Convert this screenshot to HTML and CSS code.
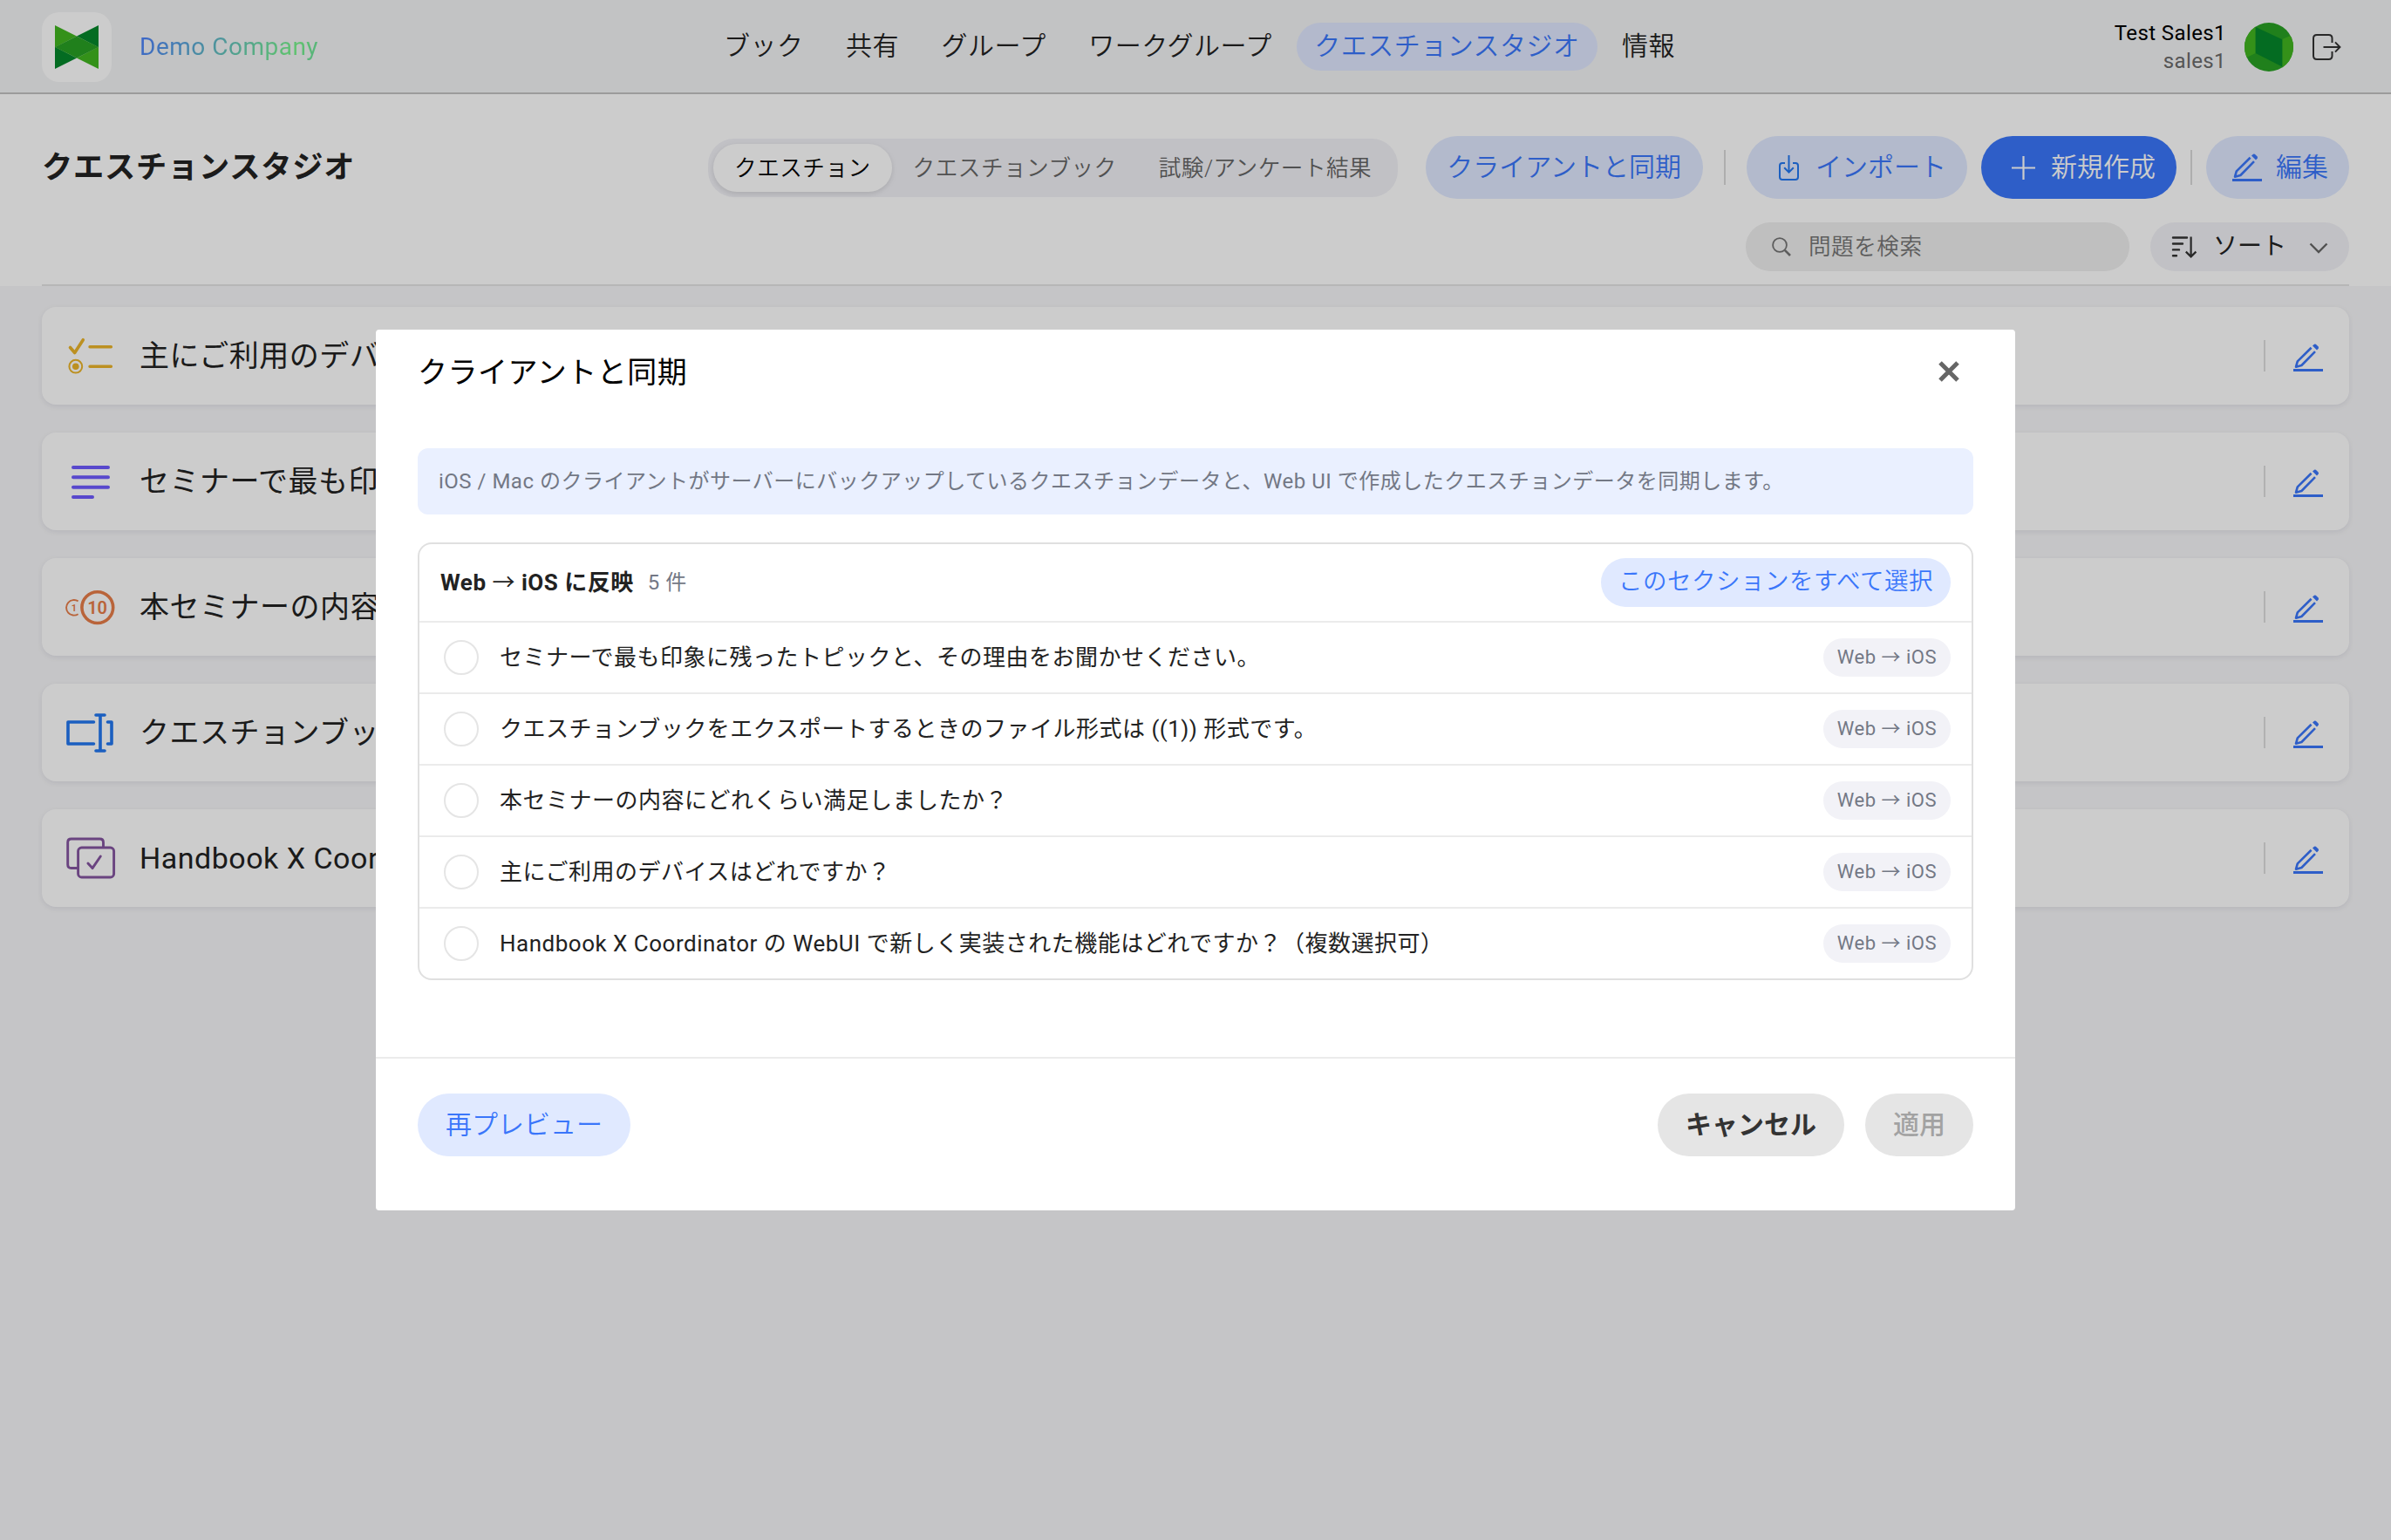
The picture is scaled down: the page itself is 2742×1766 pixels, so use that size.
FILE: index.html
```html
<!DOCTYPE html>
<html lang="ja">
    <head>
        <meta charset="utf-8">
        <title>クエスチョンスタジオ</title>
        <link rel="stylesheet" href="styles.css">
    </head>
    <body>
        <svg class="defs">
            <symbol id="pencil" viewBox="0 0 34 32">
                <path d="M20.6 4.8L4.8 20.4L3 26.7L9.4 25L25 9.2" fill="none" stroke="currentColor" stroke-width="2.6" stroke-linejoin="round"/>
                <path d="M22 2.6L24 .8Q25.4 .2 26.6 1.4L28.6 3.4Q29.4 4.6 28.8 5.6L27 7.6z" fill="currentColor"/>
                <path d="M0 29h34v3H0z" fill="currentColor"/>
            </symbol>
        </svg>
        <div id="header">
            <div class="brand">
                <div class="logo">
                    <svg width="50" height="50" viewBox="0 0 50 50">
                        <path d="M0 0L25 12.6L0 25.2zM50 50L25 37.4L50 24.8z" fill="#42b620"/>
                        <path d="M50 0L25 12.6L50 25.2zM0 50L25 37.4L0 24.8z" fill="#05872b"/>
                        <path d="M0 25L25 12.5L50 25L25 37.5z" fill="#28a023"/>
                    </svg>
                </div>
                <span class="company">Demo Company</span>
            </div>
            <div class="nav">
                <a>ブック</a>
                <a>共有</a>
                <a>グループ</a>
                <a>ワークグループ</a>
                <a class="active">クエスチョンスタジオ</a>
                <a>情報</a>
            </div>
            <div class="user">
                <div class="names">
                    <div>Test Sales1</div>
                    <div class="login">sales1</div>
                </div>
                <svg class="avatar" width="56" height="56" viewBox="0 0 56 56">
                    <path d="M0 0h56v56H0z" fill="#28a023"/>
                    <path d="M0 0h12.7v35L0 41zM56 13.5L43.3 19v37H56z" fill="#42b620"/>
                    <path d="M12.7 5L43.3 19.3V50.5L12.7 35z" fill="#05872b"/>
                </svg>
                <svg width="33" height="30" viewBox="0 0 33 30">
                    <path d="M22.5 10V5Q22.5 1 18.5 1H5Q1 1 1 5V25Q1 29 5 29H18.5Q22.5 29 22.5 25V20M12.5 15H31M26 9.4L31.4 15L26 20.6" fill="none" stroke="#333" stroke-width="2"/>
                </svg>
            </div>
        </div>
        <div id="toolbar">
            <div class="row">
                <h1>クエスチョンスタジオ</h1>
                <div class="tabs">
                    <span class="tab selected">クエスチョン</span>
                    <span class="tab">クエスチョンブック</span>
                    <span class="tab">試験/アンケート結果</span>
                </div>
                <a class="button sync">クライアントと同期</a>
                <span class="divider"></span>
                <a class="button import">
                    <svg width="23" height="29" viewBox="0 0 23 29">
                        <path d="M7 9H4Q1 9 1 12V25Q1 28 4 28H19Q22 28 22 25V12Q22 9 19 9H16M11.5 0V19.5M6.2 14.3L11.5 19.6L16.8 14.3" fill="none" stroke="#2277f0" stroke-width="2"/>
                    </svg>インポート</a>
                <a class="button primary">
                    <svg width="27" height="27" viewBox="0 0 27 27"><path d="M13.5 0v27M0 13.5h27" stroke="#fff" stroke-width="2.2"/></svg>新規作成</a>
                <span class="divider narrow"></span>
                <a class="button edit"><svg width="34" height="32"><use href="#pencil"/></svg>編集</a>
            </div>
            <div class="row filters">
                <div class="search">
                    <svg width="22" height="22" viewBox="0 0 22 22"><path d="M14.8 14.8L21 21" stroke="#757575" stroke-width="2.6"/><circle cx="9" cy="9" r="7.9" fill="none" stroke="#757575" stroke-width="1.8"/></svg>
                    <span>問題を検索</span>
                </div>
                <div class="sort">
                    <svg width="30" height="25" viewBox="0 0 30 25"><path d="M2 1.5H18M2 8.5H13M2 15.4H9M2 22.3H6" stroke="#333" stroke-width="2.4" stroke-linecap="round"/><path d="M22.6 .5V23M16.8 17.6L22.6 23.4L28.4 17.6" fill="none" stroke="#333" stroke-width="2.2"/></svg>
                    <span>ソート</span>
                    <svg class="chevron" width="22" height="13" viewBox="0 0 22 13"><path d="M1.5 1.5L11 11L20.5 1.5" fill="none" stroke="#666" stroke-width="2.4"/></svg>
                </div>
            </div>
        </div>
        <div id="list">
            <div class="card">
                <svg width="64" height="64" viewBox="0 0 64 64" fill="none" stroke="#ebb52a" stroke-linecap="round" stroke-linejoin="round">
                    <path d="M8.5 22.5L13.7 28.5L23.3 13.7" stroke-width="3.6"/>
                    <path d="M31 21.7H55.4M31 44.2H55.4" stroke-width="3.4"/>
                    <circle cx="14.8" cy="44.2" r="7.4" stroke-width="2"/>
                    <circle cx="14.8" cy="44.2" r="3.8" fill="#ebb52a" stroke="none"/>
                </svg>
                <span class="title">主にご利用のデバ</span>
                <a class="pen"><svg width="34" height="32"><use href="#pencil"/></svg></a>
            </div>
            <div class="card">
                <svg width="64" height="64" viewBox="0 0 64 64" stroke="#6e5aff" stroke-width="4" stroke-linecap="round">
                    <path d="M12 16H52M12 27.3H52M12 38.7H52M12 50H34"/>
                </svg>
                <span class="title">セミナーで最も印</span>
                <a class="pen"><svg width="34" height="32"><use href="#pencil"/></svg></a>
            </div>
            <div class="card">
                <svg width="64" height="64" viewBox="0 0 64 64" fill="none" stroke="#e87d49">
                    <circle cx="39.8" cy="32.6" r="17.9" stroke-width="3.6"/>
                    <path d="M17.6 25.4A8.8 8.8 0 1 0 17.6 40.2" stroke-width="1.9"/>
                    <text x="39.6" y="39.9" font-size="20" class="num">10</text>
                    <text x="13" y="36.8" font-size="11" class="num">1</text>
                </svg>
                <span class="title">本セミナーの内容</span>
                <a class="pen"><svg width="34" height="32"><use href="#pencil"/></svg></a>
            </div>
            <div class="card">
                <svg width="64" height="64" viewBox="0 0 64 64" fill="none" stroke="#2277f0" stroke-width="3.6" stroke-linecap="round" stroke-linejoin="round">
                    <path d="M35.5 20H6V45H35.5M51.5 20H56V45H51.5M43 12V53M38 12H48M38 53H48"/>
                </svg>
                <span class="title">クエスチョンブッ</span>
                <a class="pen"><svg width="34" height="32"><use href="#pencil"/></svg></a>
            </div>
            <div class="card">
                <svg width="64" height="64" viewBox="0 0 64 64" fill="none" stroke="#8555a0" stroke-width="2.9" stroke-linecap="round" stroke-linejoin="round">
                    <path d="M46.5 19V14Q46.5 10 42.5 10H9.7Q5.7 10 5.7 14V39.5Q5.7 43.5 9.7 43.5H16"/>
                    <rect x="17.6" y="20" width="41" height="34" rx="4"/>
                    <path d="M28.9 38L34 43.6L43.3 30"/>
                </svg>
                <span class="title">Handbook X Coor</span>
                <a class="pen"><svg width="34" height="32"><use href="#pencil"/></svg></a>
            </div>
        </div>

        <div id="overlay">
            <div class="modal">
                <div class="modal-head">
                    <h2>クライアントと同期</h2>
                    <svg width="24" height="24" viewBox="0 0 24 24"><path d="M2 2L22 22M22 2L2 22" stroke="#666" stroke-width="5"/></svg>
                </div>
                <div class="modal-body">
                    <div class="info">iOS / Mac のクライアントがサーバーにバックアップしているクエスチョンデータと、Web UI で作成したクエスチョンデータを同期します。</div>
                    <div class="section">
                        <div class="section-head">
                            <b>Web <span class="arrow">→</span> iOS に反映</b>
                            <span class="count">5 件</span>
                            <a class="select-all">このセクションをすべて選択</a>
                        </div>
                        <div class="item"><i></i><span>セミナーで最も印象に残ったトピックと、その理由をお聞かせください。</span><em>Web → iOS</em></div>
                        <div class="item"><i></i><span>クエスチョンブックをエクスポートするときのファイル形式は ((1)) 形式です。</span><em>Web → iOS</em></div>
                        <div class="item"><i></i><span>本セミナーの内容にどれくらい満足しましたか？</span><em>Web → iOS</em></div>
                        <div class="item"><i></i><span>主にご利用のデバイスはどれですか？</span><em>Web → iOS</em></div>
                        <div class="item"><i></i><span>Handbook X Coordinator の WebUI で新しく実装された機能はどれですか？（複数選択可）</span><em>Web → iOS</em></div>
                    </div>
                </div>
                <div class="modal-foot">
                    <a class="button preview">再プレビュー</a>
                    <a class="button gray">キャンセル</a>
                    <a class="button gray disabled">適用</a>
                </div>
            </div>
        </div>
    </body>
</html>
```

FILE: styles.css
```css
* {
    box-sizing: border-box;
}
body {
    margin: 0;
    height: 1766px;
    overflow: hidden;
    background: #f7f7f9;
    color: #222;
    font-family: Roboto, "Noto Sans CJK JP", sans-serif;
    letter-spacing: 0.5px;
    white-space: nowrap;
}
svg {
    display: block;
    flex: none;
}
.defs {
    position: absolute;
    width: 0;
    height: 0;
}
#header {
    display: flex;
    align-items: center;
    height: 108px;
    padding: 1px 57px 0 48px;
    background: #f3f4f6;
    border-bottom: 2px solid #c2c2c2;
}
.brand {
    display: flex;
    align-items: center;
    width: 762px;
}
.logo {
    width: 80px;
    height: 80px;
    margin-right: 32px;
    padding: 15px;
    border-radius: 20px;
    background: #fff;
}
.company {
    font-size: 28px;
    line-height: 40px;
    color: transparent;
    background: linear-gradient(120deg, #4a7cff 0%, #78f48b 84%, #6ad8a0 100%);
    -webkit-background-clip: text;
    background-clip: text;
}
.nav {
    display: flex;
    gap: 8.5px;
    font-size: 30px;
    font-weight: 350;
}
.nav a {
    height: 55px;
    padding: 0 20px;
    border-radius: 28px;
    line-height: 53px;
}
.nav .active {
    background: #e0e8ff;
    color: #3a76fa;
}
.user {
    display: flex;
    align-items: center;
    margin-left: auto;
    font-size: 24px;
    line-height: 32px;
    letter-spacing: 0.4px;
    text-align: right;
    color: #000;
}
.login {
    color: #6b6b6b;
}
.avatar {
    margin: 0 22px 0 21px;
    border-radius: 50%;
}
#toolbar {
    height: 220px;
    padding: 48px 48px 0;
    background: linear-gradient(#e5e5e5, #e5e5e5) 48px 218px / calc(100% - 96px) 2px no-repeat #fff;
}
.row {
    display: flex;
    align-items: center;
}
h1 {
    flex: 1;
    margin: 0;
    font-size: 35.2px;
    line-height: 50px;
    font-weight: 700;
    letter-spacing: 0.8px;
}
.tabs {
    display: flex;
    height: 67px;
    margin-right: 32px;
    padding: 6px;
    border-radius: 30px;
    background: #f2f2f7;
    font-size: 25.6px;
    font-weight: 350;
    line-height: 56px;
    color: #666;
}
.tab {
    padding: 0 24px;
    border-radius: 27px;
}
.selected {
    background: #fff;
    color: #000;
    box-shadow: 0 2px 6px rgba(0, 0, 0, 0.12);
}
.button {
    display: flex;
    align-items: center;
    height: 72px;
    padding: 0 24px;
    border-radius: 36px;
    background: #e0e9ff;
    color: #3a76fa;
    font-size: 30px;
    font-weight: 350;
    line-height: 72px;
    letter-spacing: 0;
}
.sync {
    padding-right: 25px;
}
.divider {
    width: 2px;
    height: 40px;
    margin: 0 24px;
    background: #dadada;
}
.narrow {
    margin: 0 16px;
}
.import {
    gap: 19px;
    padding-left: 37px;
    margin-right: 16px;
}
.primary {
    gap: 18px;
    padding-left: 35px;
    background: #3a76fa;
    color: #fff;
}
.edit {
    gap: 16px;
    padding-left: 30px;
}
.filters {
    justify-content: flex-end;
    margin-top: 27px;
    gap: 24px;
}
.search {
    display: flex;
    align-items: center;
    gap: 20px;
    width: 440px;
    height: 56px;
    padding-left: 30px;
    border-radius: 28px;
    background: #efefef;
    color: #757575;
    font-size: 25.6px;
    font-weight: 350;
    line-height: 54px;
}
.sort {
    display: flex;
    align-items: center;
    gap: 18px;
    width: 228px;
    height: 56px;
    padding: 0 24px;
    border-radius: 28px;
    background: #f2f2f7;
    font-size: 28px;
    line-height: 54px;
    letter-spacing: 0;
}
.chevron {
    margin: 3px 0 0 auto;
}
#list {
    display: grid;
    gap: 32px;
    padding: 24px 48px;
}
.card {
    display: flex;
    align-items: center;
    gap: 24px;
    height: 112px;
    padding: 0 30px 0 24px;
    border-radius: 16px;
    background: #fff;
    box-shadow: 0 2px 6px rgba(30, 30, 80, 0.09);
    font-size: 34px;
    line-height: 50px;
}
.num {
    fill: #e87d49;
    stroke: none;
    font-weight: 600;
    letter-spacing: 0;
    text-anchor: middle;
}
.pen {
    margin-left: auto;
    padding: 4px 0 0 32px;
    border-left: 2px solid #dedede;
    color: #3a76fa;
}
#overlay {
    position: fixed;
    inset: 0;
    background: rgba(0, 0, 0, 0.2);
}
.modal {
    width: 1880px;
    height: 1010px;
    margin: 378px auto 0;
    border-radius: 4px;
    background: #fff;
}
.modal-head {
    display: flex;
    align-items: center;
    justify-content: space-between;
    height: 96px;
    padding: 0 64px 0 48px;
}
h2 {
    margin: 2px 0 0;
    font-size: 34px;
    line-height: 50px;
    font-weight: 400;
    color: #000;
}
.modal-body {
    height: 738px;
    padding: 40px 48px 0;
}
.info {
    height: 76px;
    padding: 0 24px;
    border-radius: 12px;
    background: #eaf0ff;
    color: #737885;
    font-size: 24px;
    line-height: 76px;
}
.section {
    margin-top: 32px;
    border: 2px solid #e0e0e0;
    border-radius: 16px;
}
.section-head {
    display: flex;
    align-items: center;
    height: 88px;
    padding: 0 24px;
    font-size: 26px;
    line-height: 40px;
}
.arrow {
    font-weight: 400;
}
.count {
    margin-left: 16px;
    font-size: 24px;
    color: #737885;
}
.select-all {
    height: 56px;
    margin-left: auto;
    padding: 0 20px;
    border-radius: 28px;
    background: #e0e9ff;
    color: #3a76fa;
    font-size: 27.5px;
    font-weight: 350;
    line-height: 54px;
}
.item {
    display: flex;
    align-items: center;
    height: 82px;
    padding: 0 24px 0 28px;
    border-top: 2px solid #ebebeb;
    font-size: 26px;
    line-height: 40px;
}
.item i {
    width: 40px;
    height: 40px;
    margin-right: 24px;
    border: 2px solid #e5e5e5;
    border-radius: 50%;
}
.item em {
    height: 44px;
    margin-left: auto;
    padding: 0 16px;
    border-radius: 22px;
    background: #f2f2f7;
    color: #737885;
    font-size: 22px;
    font-style: normal;
    line-height: 44px;
}
.modal-foot {
    display: flex;
    gap: 24px;
    padding: 40px 48px 0;
    border-top: 2px solid #ebebeb;
}
.modal-foot .button {
    padding: 0 32px;
}
.preview {
    margin-right: auto;
}
.modal-foot .gray {
    background: #e5e5e5;
    color: #333;
    font-weight: 700;
}
.modal-foot .disabled {
    color: #a2a2a2;
    font-weight: 500;
}
```
